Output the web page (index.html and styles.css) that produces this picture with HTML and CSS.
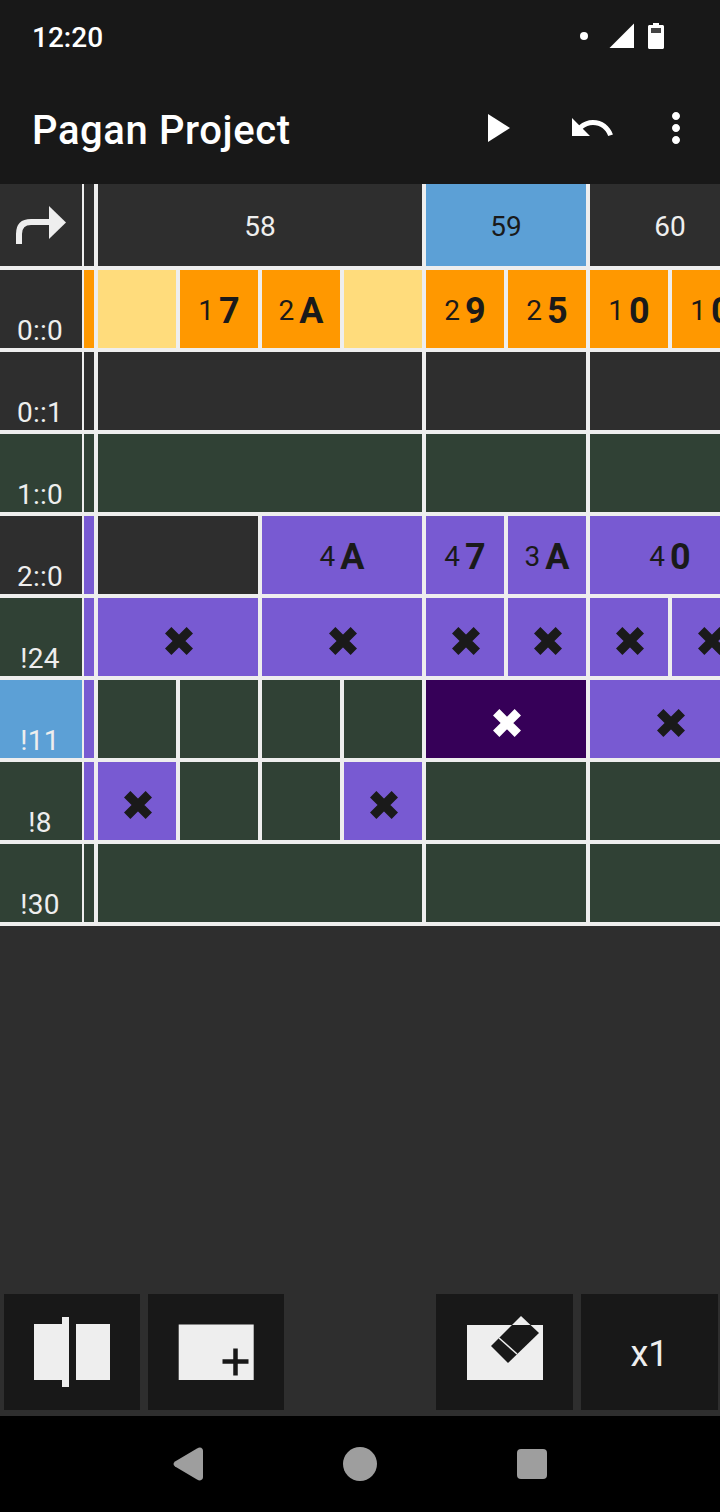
FILE: index.html
```html
<!DOCTYPE html>
<html lang="en">
<head>
    <meta charset="UTF-8">
    <meta name="viewport" content="width=device-width, initial-scale=1.0">
    <title>Pagan Project</title>
    <link rel="stylesheet" href="styles.css">
</head>
<body>
    <svg class="defs" width="0" height="0">
        <symbol id="cross" viewBox="0 0 28 28">
            <path d="M3.2 3.2L24.8 24.8M24.8 3.2L3.2 24.8" stroke="currentColor" stroke-width="9" fill="none"/>
        </symbol>
    </svg>

    <div class="status-bar">
        <span class="clock">12:20</span>
        <div class="status-icons">
            <svg width="8" height="8" viewBox="0 0 8 8" class="status-dot"><circle cx="4" cy="4" r="4" fill="#fff"/></svg>
            <svg width="26" height="26" viewBox="0 0 26 26" class="status-signal"><path d="M25 0.5V25H0.5z" fill="#fff"/></svg>
            <svg width="16" height="26" viewBox="0 0 16 26"><path d="M5 0h6v2h3.5c.8 0 1.5.7 1.5 1.5V24.500c0 .8-.7 1.500-1.500 1.500H1.500C.7 26 0 25.300 0 24.500V3.500C0 2.700.7 2 1.500 2H5z" fill="#fff"/><rect x="3" y="5" width="10" height="5" fill="#444"/></svg>
        </div>
    </div>

    <header class="toolbar">
        <h1>Pagan Project</h1>
        <button class="action" aria-label="Play"><svg width="48" height="48" viewBox="0 0 24 24"><path d="M8 5v14l11-7z" fill="#fff"/></svg></button>
        <button class="action" aria-label="Undo"><svg width="48" height="48" viewBox="0 0 24 24"><path d="M12.5 8c-2.65 0-5.05.99-6.9 2.6L2 7v9h9l-3.62-3.62c1.39-1.16 3.16-1.88 5.12-1.88 3.54 0 6.55 2.31 7.6 5.5l2.37-.78C21.08 11.03 17.15 8 12.5 8z" fill="#fff"/></svg></button>
        <button class="action overflow" aria-label="More"><svg width="48" height="48" viewBox="0 0 24 24"><path d="M12 8c1.1 0 2-.9 2-2s-.9-2-2-2-2 .9-2 2 .9 2 2 2zm0 2c-1.1 0-2 .9-2 2s.9 2 2 2 2-.9 2-2-.9-2-2-2zm0 6c-1.1 0-2 .9-2 2s.9 2 2 2 2-.9 2-2-.9-2-2-2z" fill="#fff"/></svg></button>
    </header>

    <main>
        <div class="table">
            <div class="row head">
                <div class="label dark corner">
                    <svg width="54" height="40" viewBox="0 0 54 40"><path d="M4 38V28Q4 16 16 16H36" stroke="#eee" stroke-width="6" fill="none"/><path d="M34 0L51 16.500L34 33z" fill="#eee"/></svg>
                </div>
                <div class="gutter dark"></div>
                <div class="cells">
                    <div class="cell span-4 dark beat">58</div>
                    <div class="cell span-2 blue beat on-light">59</div>
                    <div class="cell span-2 dark beat">60</div>
                </div>
            </div>

            <div class="row">
                <div class="label dark">0::0</div>
                <div class="gutter orange"></div>
                <div class="cells">
                    <div class="cell yellow"></div>
                    <div class="cell orange"><span class="oct">1</span><b>7</b></div>
                    <div class="cell orange"><span class="oct">2</span><b>A</b></div>
                    <div class="cell yellow"></div>
                    <div class="cell orange"><span class="oct">2</span><b>9</b></div>
                    <div class="cell orange"><span class="oct">2</span><b>5</b></div>
                    <div class="cell orange"><span class="oct">1</span><b>0</b></div>
                    <div class="cell orange"><span class="oct">1</span><b>0</b></div>
                </div>
            </div>

            <div class="row">
                <div class="label dark">0::1</div>
                <div class="gutter dark"></div>
                <div class="cells">
                    <div class="cell span-4 dark"></div>
                    <div class="cell span-2 dark"></div>
                    <div class="cell span-2 dark"></div>
                </div>
            </div>

            <div class="row">
                <div class="label green">1::0</div>
                <div class="gutter green"></div>
                <div class="cells">
                    <div class="cell span-4 green"></div>
                    <div class="cell span-2 green"></div>
                    <div class="cell span-2 green"></div>
                </div>
            </div>

            <div class="row">
                <div class="label dark">2::0</div>
                <div class="gutter purple"></div>
                <div class="cells">
                    <div class="cell span-2 dark"></div>
                    <div class="cell span-2 purple"><span class="oct">4</span><b>A</b></div>
                    <div class="cell purple"><span class="oct">4</span><b>7</b></div>
                    <div class="cell purple"><span class="oct">3</span><b>A</b></div>
                    <div class="cell span-2 purple"><span class="oct">4</span><b>0</b></div>
                </div>
            </div>

            <div class="row">
                <div class="label green">!24</div>
                <div class="gutter purple"></div>
                <div class="cells">
                    <div class="cell span-2 purple"><svg class="hit"><use href="#cross"/></svg></div>
                    <div class="cell span-2 purple"><svg class="hit"><use href="#cross"/></svg></div>
                    <div class="cell purple"><svg class="hit"><use href="#cross"/></svg></div>
                    <div class="cell purple"><svg class="hit"><use href="#cross"/></svg></div>
                    <div class="cell purple"><svg class="hit"><use href="#cross"/></svg></div>
                    <div class="cell purple"><svg class="hit"><use href="#cross"/></svg></div>
                </div>
            </div>

            <div class="row">
                <div class="label blue">!11</div>
                <div class="gutter purple"></div>
                <div class="cells">
                    <div class="cell green"></div>
                    <div class="cell green"></div>
                    <div class="cell green"></div>
                    <div class="cell green"></div>
                    <div class="cell span-2 selected"><svg class="hit"><use href="#cross"/></svg></div>
                    <div class="cell span-2 purple"><svg class="hit"><use href="#cross"/></svg></div>
                </div>
            </div>

            <div class="row">
                <div class="label green">!8</div>
                <div class="gutter purple"></div>
                <div class="cells">
                    <div class="cell purple"><svg class="hit"><use href="#cross"/></svg></div>
                    <div class="cell green"></div>
                    <div class="cell green"></div>
                    <div class="cell purple"><svg class="hit"><use href="#cross"/></svg></div>
                    <div class="cell span-2 green"></div>
                    <div class="cell span-2 green"></div>
                </div>
            </div>

            <div class="row">
                <div class="label green">!30</div>
                <div class="gutter green"></div>
                <div class="cells">
                    <div class="cell span-4 green"></div>
                    <div class="cell span-2 green"></div>
                    <div class="cell span-2 green"></div>
                </div>
            </div>
        </div>

        <div class="tools">
            <button class="tool" aria-label="Split">
                <svg width="76" height="70" viewBox="0 0 76 70"><path d="M0 7H28V0H35V70H28V63H0zM42 7H76V63H42z" fill="#eee"/></svg>
            </button>
            <button class="tool" aria-label="Insert">
                <svg width="76" height="56" viewBox="0 0 76 56"><rect x="0.7" y="0.5" width="75" height="55.500" fill="#eee"/><path d="M44.500 37.500H70.500M57.500 24.500V51.500" stroke="#181818" stroke-width="4.500"/></svg>
            </button>
            <button class="tool erase" aria-label="Erase">
                <svg width="76" height="72" viewBox="0 0 76 72"><rect y="9" width="76" height="55" fill="#eee"/><path d="M54 0L72 17L41 47L24 30z" fill="#181818"/><path d="M54 0L63.500 9H45z" fill="#eee"/><path d="M32 22L50 38" stroke="#eee" stroke-width="1.500"/></svg>
            </button>
            <button class="tool wide">x1</button>
        </div>
    </main>

    <nav class="nav-bar">
        <svg width="48" height="48" viewBox="0 0 48 48"><path d="M33 8.500Q36.500 6.500 38.500 9Q39 10 39 11V37Q39 38 38.500 39Q36.500 41.500 33 39.500L11 26.500Q8 24 11 21.500z" fill="#9e9e9e"/></svg>
        <svg width="48" height="48" viewBox="0 0 48 48"><circle cx="24" cy="24" r="17" fill="#9e9e9e"/></svg>
        <svg width="48" height="48" viewBox="0 0 48 48"><rect x="9" y="9" width="30" height="30" rx="4" fill="#9e9e9e"/></svg>
    </nav>
</body>
</html>
```

FILE: styles.css
```css
* {
    box-sizing: border-box;
}
body {
    margin: 0;
    height: 1512px;
    display: flex;
    flex-direction: column;
    overflow: hidden;
    font-family: Roboto, "Liberation Sans", sans-serif;
    background-color: #2e2e2e;
    color: #eee;
}
button {
    border: none;
    padding: 0;
    font-family: inherit;
    color: inherit;
    background: none;
}
.defs {
    position: absolute;
}

/* status bar */
.status-bar {
    height: 72px;
    padding: 0 56px 0 32px;
    display: flex;
    align-items: center;
    justify-content: space-between;
    background-color: #181818;
    color: #fff;
}
.clock {
    padding-top: 4px;
    font-size: 28px;
    font-weight: 500;
    line-height: 74px;
}
.status-icons {
    display: flex;
    align-items: center;
}
.status-icons svg {
    display: block;
}
.status-dot {
    margin-right: 21px;
}
.status-signal {
    margin-right: 13px;
}

/* toolbar */
.toolbar {
    height: 112px;
    padding-right: 8px;
    display: flex;
    align-items: center;
    background-color: #181818;
    color: #fff;
}
.toolbar h1 {
    flex: 1;
    margin: 0 0 0 32px;
    padding-top: 4px;
    font-size: 40px;
    font-weight: 500;
    letter-spacing: 0.6px;
}
.action {
    width: 96px;
    height: 96px;
    display: flex;
    align-items: center;
    justify-content: center;
}
.overflow {
    width: 72px;
}

/* table */
main {
    flex: 1;
    display: flex;
    flex-direction: column;
    justify-content: space-between;
}
.table {
    background-color: #eee;
    overflow: hidden;
}
.row {
    height: 78px;
    margin-bottom: 4px;
    display: flex;
}
.row.head {
    height: 82px;
}
.label {
    flex: none;
    width: 82px;
    margin-right: 2px;
    padding-right: 2px;
    display: flex;
    align-items: flex-end;
    justify-content: center;
    font-size: 28px;
    line-height: 35px;
    letter-spacing: 0.3px;
}
.corner {
    padding: 2px 0 0 2px;
    align-items: center;
}
.gutter {
    flex: none;
    width: 10px;
    margin-right: 4px;
}
.cells {
    flex: none;
    display: grid;
    grid-template-columns: repeat(8, 78px);
    column-gap: 4px;
}
.cell {
    padding-top: 3px;
    display: flex;
    align-items: center;
    justify-content: center;
    color: #1a1a1a;
}
.span-2 {
    grid-column: span 2;
}
.span-4 {
    grid-column: span 4;
}
.beat {
    font-size: 28px;
    color: #eee;
}
.beat.on-light {
    color: #1a1a1a;
}
.oct {
    margin-right: 5px;
    font-size: 28px;
}
.cell b {
    font-size: 36px;
    font-weight: 700;
}
.hit {
    width: 28px;
    height: 28px;
    margin: 4px 0 0 2px;
}

.dark {
    background-color: #2e2e2e;
}
.green {
    background-color: #304135;
}
.orange {
    background-color: #ff9800;
}
.yellow {
    background-color: #ffdc7c;
}
.purple {
    background-color: #785ad2;
}
.blue {
    background-color: #5ca0d6;
}
.selected {
    background-color: #360058;
    color: #fff;
}

/* bottom buttons */
.tools {
    padding: 0 2px 6px 4px;
    display: flex;
    gap: 8px;
}
.tool {
    width: 136px;
    height: 116px;
    display: flex;
    align-items: center;
    justify-content: center;
    background-color: #181818;
    color: #eee;
    font-size: 36px;
}
.erase {
    width: 137px;
    margin-left: auto;
}
.wide {
    width: 137px;
    padding-top: 3px;
}

/* nav bar */
.nav-bar {
    height: 96px;
    display: flex;
    align-items: center;
    justify-content: center;
    gap: 124px;
    background-color: #000;
}
```
